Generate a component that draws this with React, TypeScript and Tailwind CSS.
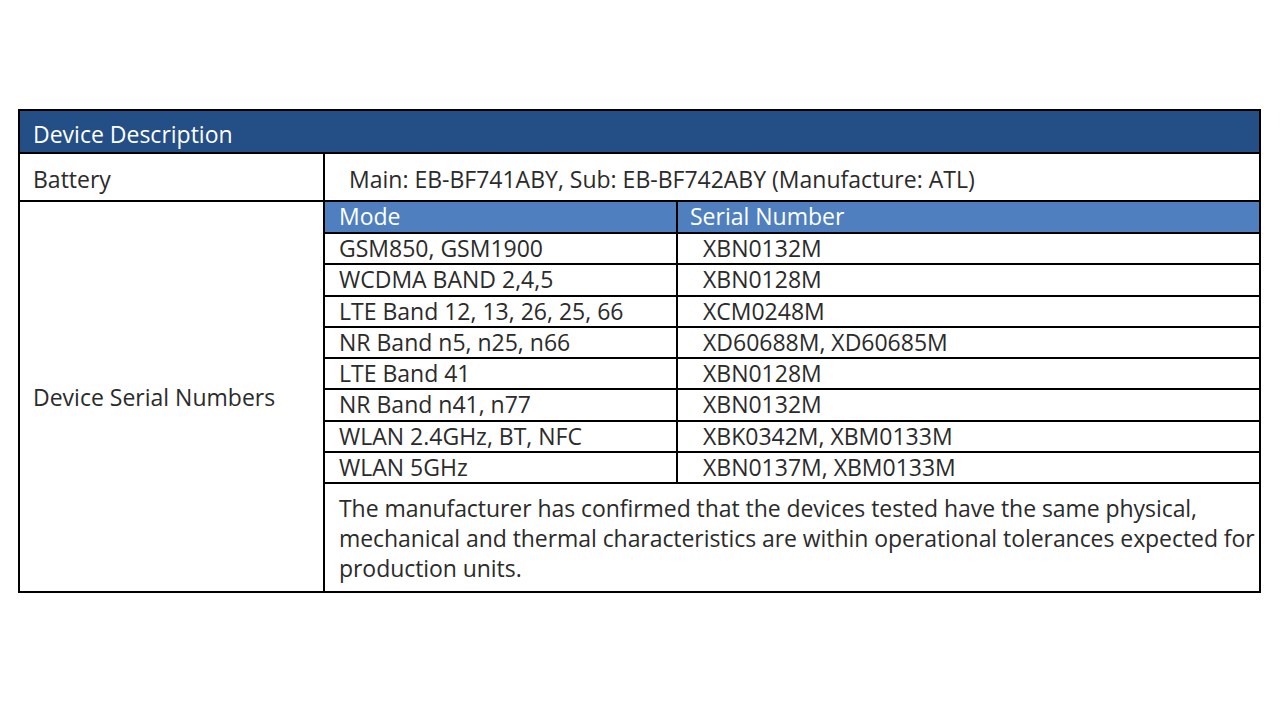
import React from "react";

const rows: [string, string][] = [
  ["GSM850, GSM1900", "XBN0132M"],
  ["WCDMA BAND 2,4,5", "XBN0128M"],
  ["LTE Band 12, 13, 26, 25, 66", "XCM0248M"],
  ["NR Band n5, n25, n66", "XD60688M, XD60685M"],
  ["LTE Band 41", "XBN0128M"],
  ["NR Band n41, n77", "XBN0132M"],
  ["WLAN 2.4GHz, BT, NFC", "XBK0342M, XBM0133M"],
  ["WLAN 5GHz", "XBN0137M, XBM0133M"],
];

export default function App() {
  return (
    <div
      className="w-[1280px] h-[720px] bg-white pt-[109px] pl-[18px] text-[#2b2b2b] text-[23px] leading-[24px]"
      style={{ fontFamily: '"Open Sans", "Noto Sans", sans-serif' }}
    >
      <div className="w-[1243px] border-2 border-black">
        <div className="h-[43px] bg-[#234e86] text-white flex items-center px-[13px] pt-[4px] border-b-2 border-black">
          Device Description
        </div>

        <div className="grid grid-cols-[305px_minmax(0,1fr)] h-[48px] border-b-2 border-black">
          <div className="flex items-center px-[13px] pt-[3px] border-r-2 border-black">Battery</div>
          <div className="flex items-center pl-[24px] pt-[3px]">
            Main: EB-BF741ABY, Sub: EB-BF742ABY (Manufacture: ATL)
          </div>
        </div>

        <div className="grid grid-cols-[305px_minmax(0,1fr)]">
          <div className="flex items-center px-[13px] border-r-2 border-black">
            Device Serial Numbers
          </div>
          <div className="min-w-0">
            <div className="grid grid-cols-[353px_minmax(0,1fr)] h-[32px] bg-[#4f7fbf] text-white border-b-2 border-black">
              <div className="flex items-center px-[14px] pb-[2px] border-r-2 border-black">Mode</div>
              <div className="flex items-center px-[12px] pb-[2px]">Serial Number</div>
            </div>
            {rows.map(([mode, serial]) => (
              <div key={mode} className="grid grid-cols-[353px_minmax(0,1fr)] h-[31.25px] border-b-2 border-black">
                <div className="flex items-center px-[14px] pb-[1px] border-r-2 border-black">{mode}</div>
                <div className="flex items-center pl-[25px] pb-[1px]">{serial}</div>
              </div>
            ))}
            <div className="pl-[14px] pt-[9px] pb-[8px] leading-[30px] tracking-[-0.06px] whitespace-nowrap overflow-hidden">
              The manufacturer has confirmed that the devices tested have the same physical,
              <br />
              mechanical and thermal characteristics are within operational tolerances expected for
              <br />
              production units.
            </div>
          </div>
        </div>
      </div>
    </div>
  );
}
